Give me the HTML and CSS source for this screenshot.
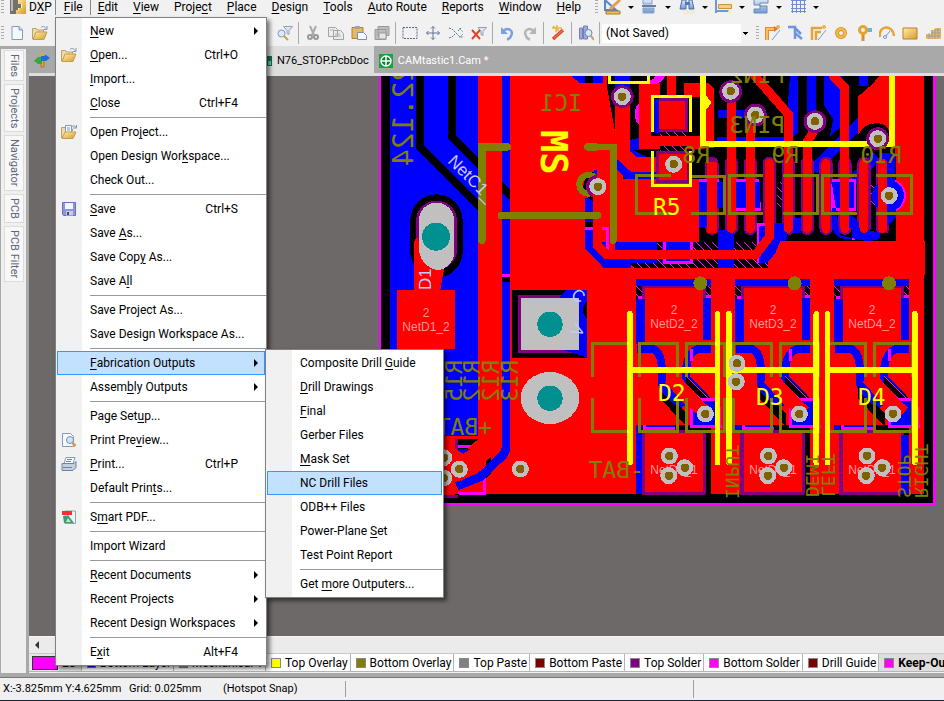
FILE: index.html
```html
<!DOCTYPE html>
<html lang="en">
<head>
<meta charset="utf-8">
<title>N76_STOP.PcbDoc</title>
<link rel="stylesheet" href="styles.css">
</head>
<body>
<svg class="defs" aria-hidden="true">
  <defs>
    <linearGradient id="gold" x1="0" y1="0" x2="1" y2="1"><stop offset="0" stop-color="#fff0a8"/><stop offset="1" stop-color="#d99a28"/></linearGradient>
    <linearGradient id="steel" x1="0" y1="0" x2="0" y2="1"><stop offset="0" stop-color="#dfeafa"/><stop offset="1" stop-color="#6f9ad8"/></linearGradient>
    <pattern id="hatch" width="24" height="24" patternUnits="userSpaceOnUse"><path d="M0 0h24v24H0z"/><path d="M-2-2L26 26" stroke="#f0f" stroke-width="3"/></pattern>
    <symbol id="page" viewBox="0 0 16 16"><path d="M3 1.5h7l3.500 3.500v9.500H3z" fill="#f4f9ff" stroke="#8598b5"/><path d="M10 1.500V5h3.500" fill="#c6d8ee" stroke="#8598b5"/></symbol>
    <symbol id="open" viewBox="0 0 16 16"><path d="M.5 14V3.500h4l1 1.500h6v2" fill="#f1dca6" stroke="#b8a070"/><path d="M1 14.500l3-7.500h11l-3 7.500z" fill="url(#gold)" stroke="#c09a58"/><path d="M9 2.500c2-2 4-1 5 1M15 1v3.500h-3.500" fill="none" stroke="#8096b8"/></symbol>
    <symbol id="openprj" viewBox="0 0 16 16"><path d="M.5 14V3.500h4l1 1.500h6v2" fill="#f1dca6" stroke="#b8a070"/><path d="M4.500 1.500h6V9h-6z" fill="#f8fbff" stroke="#8598b5"/><path d="M6 4h3M6 6h3" stroke="#8598b5"/><path d="M1 14.500l3-6.500h11l-3 6.500z" fill="url(#gold)" stroke="#c09a58"/><path d="M11 2.500c2-1 3-1 4 1M15.500 1v3H12" fill="none" stroke="#8096b8"/></symbol>
    <symbol id="save" viewBox="0 0 16 16"><path d="M1.500 1.500h13v13h-12l-1-1z" fill="#8f94df" stroke="#6a6fb8"/><path d="M4 2h8v6H4z" fill="#f2f5fc"/><path d="M5 10h7v4.500H5z" fill="#c8cde0"/><path d="M6 11h2v3H6z" fill="#444a66"/></symbol>
    <symbol id="preview" viewBox="0 0 16 16"><path d="M1.500 1.500h8l3 3v10h-11z" fill="#f8fbff" stroke="#8598b5"/><circle cx="9" cy="8" r="3.500" fill="#cfe2f6" stroke="#7790b5"/><path d="M11.500 11l3 3" stroke="#d39a4a" stroke-width="2.500"/></symbol>
    <symbol id="print" viewBox="0 0 16 16"><path d="M5 1.500h9l-2 6H3z" fill="#fafcff" stroke="#8898b0"/><path d="M1 7.500h12l2-2v6l-3 3H1z" fill="#c3cee0" stroke="#6f83a3"/><path d="M2 11.500h9M6 3.500h5M5 5.500h5" stroke="#7083a0"/></symbol>
    <symbol id="pdf" viewBox="0 0 16 16"><path d="M4 2h10.500v12.500H4z" fill="#eef4f4" stroke="#91a6aa"/><path d="M1 2h10v4H1z" fill="#e33"/><path d="M2 7h3l2-1 6 8H3z" fill="#3f9c72"/><path d="M7 9l3 4H5z" fill="#bfe6ce"/></symbol>
    <symbol id="filter" viewBox="0 0 16 16"><circle cx="4.500" cy="8.500" r="3.500" fill="#dce9f8" stroke="#8094b5"/><path d="M7 11l4 4" stroke="#d39a4a" stroke-width="2"/><path d="M6.500 1.500h9l-3.500 4v4l-2-1v-3z" fill="#dfe6f1" stroke="#8ea0bc"/></symbol>
    <symbol id="cut" viewBox="0 0 16 16"><path d="M5 1l4 9M11 1L7 10" stroke="#aaa" stroke-width="2"/><circle cx="5" cy="12" r="2" fill="none" stroke="#999" stroke-width="2"/><circle cx="11" cy="12" r="2" fill="none" stroke="#999" stroke-width="2"/></symbol>
    <symbol id="copy" viewBox="0 0 16 16"><path d="M.5 2.500h7l2 2v7h-9zM5.500 5.500h7l3 3v6h-10z" fill="#ececec" stroke="#a3a3a3"/><path d="M7 9h5M7 11h6M2 5h4" stroke="#b0b0b0"/></symbol>
    <symbol id="paste" viewBox="0 0 16 16"><path d="M1 2.500h11v11H1z" fill="#e8b95a" stroke="#ad803a"/><path d="M4 1h5v3H4z" fill="#9aa6b8"/><path d="M6.500 7.500h6l3 3v4h-9z" fill="#f8fbff" stroke="#7890b8"/></symbol>
    <symbol id="pastes" viewBox="0 0 16 16"><path d="M4 1.500h11v9H4zM1 4.500h11v10H1z" fill="#bcbcbc" stroke="#999"/><path d="M5 8h7v6H5z" fill="#e6e6e6" stroke="#999"/></symbol>
    <symbol id="marquee" viewBox="0 0 16 16"><path d="M1 2.500h14v11H1z" fill="none" stroke="#53688f" stroke-dasharray="2 1"/></symbol>
    <symbol id="move" viewBox="0 0 16 16"><path d="M8 1.500v13M1.500 8h13M6 3.500l2-2 2 2M6 12.500l2 2 2-2M3.500 6l-2 2 2 2M12.500 6l2 2-2 2" fill="none" stroke="#617598"/></symbol>
    <symbol id="cross" viewBox="0 0 16 16"><path d="M1 3l3 1 8 8h3M1 13l3-1 3-3M10 6l3-3" fill="none" stroke="#58719c" stroke-dasharray="2 1"/><path d="M11 3l4 4M11 13l4-4" stroke="#8b9"/></symbol>
    <symbol id="clear" viewBox="0 0 16 16"><path d="M7 2.500h8.500l-3.500 4v4l-2-1v-3z" fill="#dfe6f1" stroke="#8ea0bc"/><path d="M1 5l8 9M9 5l-8 9" stroke="#e04326" stroke-width="2"/></symbol>
    <symbol id="undo" viewBox="0 0 16 16"><path d="M4 6c5-4 11-1 8 5-.5 1.500-2 3-4 3.500" fill="none" stroke="#7d9fdf" stroke-width="2.500"/><path d="M2 2v7h7z" fill="#7d9fdf"/></symbol>
    <symbol id="redo" viewBox="0 0 16 16"><path d="M12 6C7 2 1 5 4 11c.5 1.500 2 3 4 3.500" fill="none" stroke="#b5b5b5" stroke-width="2.500"/><path d="M14 2v7H7z" fill="#b5b5b5"/></symbol>
    <symbol id="wand" viewBox="0 0 16 16"><path d="M3 14L13 5" stroke="#d84a28" stroke-width="3.500"/><path d="M4 13L13 5" stroke="#f58a62" stroke-width="1"/><path d="M2 3h10M7 0l-1 7M3 1l6 5" stroke="#e9b23c" stroke-width="1.500"/></symbol>
    <symbol id="browse" viewBox="0 0 16 16"><path d="M1.500 3h3v11h-3zM5.500 1h4v13h-4z" fill="#9daada" stroke="#7480b8"/><circle cx="10.500" cy="8" r="3.500" fill="#dbeafa" stroke="#6f87b4"/><path d="M13 11l3 4" stroke="#d39a4a" stroke-width="2"/></symbol>
    <symbol id="draw" viewBox="0 0 20 16"><path d="M2 1v10h11z" fill="#e7eefb" stroke="#5c83c8" stroke-width="2"/><path d="M7 10L17 1" stroke="#e0a050" stroke-width="3"/><path d="M3 12h14v3H3z" fill="#f0bd55" stroke="#a5782d"/></symbol>
    <symbol id="align" viewBox="0 0 20 16"><path d="M3 0h9v5H3zM3 9h11v5H3z" fill="url(#steel)" stroke="#8b9fc4"/><path d="M2 7h14" stroke="#3d5685" stroke-width="1.500"/></symbol>
    <symbol id="binoc" viewBox="0 0 20 16"><path d="M5 1h4v9H3zM12 1h3l2 9h-5z" fill="url(#steel)" stroke="#4f6fa5"/><path d="M8 3h5v3H8z" fill="#5477b5"/><circle cx="9" cy="13" r="2" fill="none" stroke="#eedb74" stroke-dasharray="1 1"/><circle cx="15" cy="13" r="2" fill="none" stroke="#eedb74" stroke-dasharray="1 1"/></symbol>
    <symbol id="dim" viewBox="0 0 20 16"><path d="M2 0v14M1 12h14" stroke="#6e96da" stroke-width="2"/><path d="M4.500 5.500h13v4h-13z" fill="#f5cf7b" stroke="#c49444"/><circle cx="16" cy="13" r="2" fill="#faf3a3"/></symbol>
    <symbol id="room" viewBox="0 0 20 16"><path d="M3 0h14v4H9v3h7v7H3v-4h6V6H3z" fill="url(#steel)" stroke="#7189b4"/></symbol>
    <symbol id="grid" viewBox="0 0 20 16"><path d="M4.500 0v14M8.500 0v14M12.500 0v14M16.500 0v14M3 1.500h15M3 5.500h15M3 9.500h15M3 12.500h15" stroke="#6c8fd2"/></symbol>
    <symbol id="route" viewBox="0 0 16 16"><path d="M3 15V4h8" fill="none" stroke="#dc8a3b" stroke-width="4"/><path d="M3 15V4h8" fill="none" stroke="#ffbd55" stroke-width="2"/><path d="M8 15l8-10" stroke="#6f9fe5"/><circle cx="14" cy="2" r="2" fill="#f2b046"/><path d="M10 1l4 3-4 3z" fill="#dc713b"/></symbol>
    <symbol id="multi" viewBox="0 0 16 16"><path d="M1 2h7v12M8 3l6 6M8 8l7 6" fill="none" stroke="#7095e0" stroke-width="2.500"/></symbol>
    <symbol id="diff" viewBox="0 0 16 16"><path d="M2 15V3h10M6 15V7h5" fill="none" stroke="#e6a23d" stroke-width="2.500"/><path d="M8 15l8-10" stroke="#6f9fe5"/><circle cx="14" cy="2" r="2" fill="#f2b046"/></symbol>
    <symbol id="pad" viewBox="0 0 16 16"><circle cx="8" cy="8" r="4" fill="none" stroke="#d9912b" stroke-width="4"/><circle cx="8" cy="8" r="4" fill="none" stroke="#f6bf4a" stroke-width="2"/></symbol>
    <symbol id="viaicon" viewBox="0 0 16 16"><path d="M10 5h6" stroke="#6bb6d0" stroke-width="4"/><path d="M7 9v7" stroke="#d98f2e" stroke-width="3"/><circle cx="7" cy="5" r="3.500" fill="none" stroke="#e5a32f" stroke-width="3"/></symbol>
    <symbol id="arc" viewBox="0 0 16 16"><path d="M1 12C-1 0 14-1 15 11" fill="none" stroke="#e6a33b" stroke-width="2.500"/><path d="M7 11l4-5" stroke="#6e96da"/><circle cx="6" cy="12" r="1.500" fill="none" stroke="#6e96da"/></symbol>
    <symbol id="fill" viewBox="0 0 16 16"><path d="M1 3h14v11H1z" fill="url(#gold)" stroke="#bd7f2a"/></symbol>
    <symbol id="poly" viewBox="0 0 16 16"><path d="M1 14V9h5V5h4V3h6v11z" fill="#f4b94c"/><path d="M1 11h15M4 8v6M7 5v9M10 4v10M13 3v11M6 8h10M9 5h7" stroke="#7896d8" stroke-width=".7"/></symbol>
    <symbol id="via" viewBox="-9 -9 18 18"><circle r="8.500" fill="#c0c0c0"/><path d="M-2-4h4l2 2v4L2 4h-4l-2-2v-4z" fill="#806000"/></symbol>
  </defs>
</svg>

<header class="top">
  <div class="menubar">
    <span class="grip"></span>
    <svg class="logo" viewBox="0 0 16 16"><path d="M0 0h8v4h3v5H8v6H0z" fill="#777066"/><path d="M8 0h8v15H6v-4h3V9h3V5H8z" fill="url(#gold)"/><path d="M2 0v12" stroke="#bbb" stroke-width="2"/></svg>
    <nav class="menus" aria-label="Main menu">
      <button class="dxp">D<u>X</u>P</button><button class="opened"><u>F</u>ile</button><button><u>E</u>dit</button><button><u>V</u>iew</button><button>Proje<u>c</u>t</button><button><u>P</u>lace</button><button><u>D</u>esign</button><button><u>T</u>ools</button><button><u>A</u>uto Route</button><button><u>R</u>eports</button><button><u>W</u>indow</button><button><u>H</u>elp</button>
    </nav>
    <div class="utils">
      <span class="grip"></span>
      <button class="drop" aria-label="Utility tools"><svg><use href="#draw"/></svg></button>
      <button class="drop" aria-label="Alignment tools"><svg><use href="#align"/></svg></button>
      <button class="drop" aria-label="Find selections"><svg><use href="#binoc"/></svg></button>
      <button class="drop" aria-label="Dimensions"><svg><use href="#dim"/></svg></button>
      <button class="drop" aria-label="Rooms"><svg><use href="#room"/></svg></button>
      <button class="drop" aria-label="Grids"><svg><use href="#grid"/></svg></button>
    </div>
  </div>
  <div class="toolbar">
    <span class="grip"></span>
    <div class="files"><button class="tool" aria-label="New"><svg><use href="#page"/></svg></button><button class="tool" aria-label="Open"><svg><use href="#open"/></svg></button></div>
    <button class="tool" aria-label="Filter"><svg><use href="#filter"/></svg></button><i class="bar"></i>
    <button class="tool" aria-label="Cut"><svg><use href="#cut"/></svg></button><button class="tool" aria-label="Copy"><svg><use href="#copy"/></svg></button><button class="tool" aria-label="Paste"><svg><use href="#paste"/></svg></button><button class="tool" aria-label="Rubber stamp"><svg><use href="#pastes"/></svg></button><i class="bar"></i>
    <button class="tool" aria-label="Select area"><svg><use href="#marquee"/></svg></button><button class="tool" aria-label="Move"><svg><use href="#move"/></svg></button><button class="tool" aria-label="Deselect"><svg><use href="#cross"/></svg></button><button class="tool" aria-label="Clear filter"><svg><use href="#clear"/></svg></button><i class="bar"></i>
    <button class="tool" aria-label="Undo"><svg><use href="#undo"/></svg></button><button class="tool" aria-label="Redo"><svg><use href="#redo"/></svg></button><i class="bar"></i>
    <button class="tool" aria-label="Cross probe"><svg><use href="#wand"/></svg></button><i class="bar"></i>
    <button class="tool" aria-label="Browse"><svg><use href="#browse"/></svg></button><i class="bar"></i>
    <select class="saved" aria-label="View configuration"><option>(Not Saved)</option></select>
    <span class="grip wiregrip"></span>
    <button class="tool" aria-label="Route"><svg><use href="#route"/></svg></button><button class="tool" aria-label="Multi-route"><svg><use href="#multi"/></svg></button><button class="tool" aria-label="Differential pair"><svg><use href="#diff"/></svg></button><button class="tool" aria-label="Pad"><svg><use href="#pad"/></svg></button><button class="tool" aria-label="Via"><svg><use href="#viaicon"/></svg></button><button class="tool" aria-label="Arc"><svg><use href="#arc"/></svg></button><button class="tool" aria-label="Fill"><svg><use href="#fill"/></svg></button><button class="tool" aria-label="Polygon"><svg><use href="#poly"/></svg></button>
  </div>
</header>

<div class="workspace">
  <aside class="side"><button>Files</button><button>Projects</button><button>Navigator</button><button>PCB</button><button>PCB Filter</button></aside>
  <main class="doc">
    <div class="tabs">
      <svg class="home" viewBox="0 0 16 16"><path d="M7 5h3v10H7z" fill="#e3a62e" stroke="#8a611a" stroke-width=".6"/><path d="M0 9l4-4h4v7H4z" fill="#35a83d"/><path d="M16 6l-4-3H7v6h5z" fill="#1870d8"/><path d="M5 4l3-4 3 4z" fill="#d8b12a"/></svg>
      <button class="tab current"><svg viewBox="0 0 12 12"><path d="M0 1h11v10H0z" fill="#176b50"/><path d="M2 3h4v3H2zM7 6h3v4H7z" fill="#62d6a3"/></svg>N76_STOP.PcbDoc</button>
      <button class="tab"><svg viewBox="0 0 14 14"><path d="M0 0h14v14H0z" fill="#17a33a"/><circle cx="7" cy="7" r="5" fill="#0b7f2a" stroke="#fff" stroke-width="1.500"/><path d="M7 2v10M2 7h10" stroke="#fff" stroke-width="1.500"/></svg>CAMtastic1.Cam *</button>
    </div>
    <div class="canvas">
    <svg class="board" viewBox="29 76 915 560" preserveAspectRatio="xMinYMin slice" role="img" aria-label="PCB layout" shape-rendering="crispEdges">
      <path fill="#f0f" d="M379 70h557v436H379z"/><path d="M381 70h552v433H381z"/>
      <path fill="#f00" d="M510 70h414v424H510zM443 436h70v58h-70z"/>
      <path fill="#00f" d="M390 70h88v366h-88zM502 70h8v380h-8z"/>
      <path d="M420 70v77l66 66M452 70v67l60 60" fill="none" stroke="#000" stroke-width="8"/>
      <path fill="#f00" d="M478 70h24v385h-24z"/>

      <g transform="translate(375 70) scale(.33333)">
        <path fill="#f00" d="M405 18h292v642H418q-13 0-13-15z"/>
        <path fill="#00f" d="M588 18h42v21h-15zM657 18h26v20h-26zM720 310l30 15v-40z"/><path d="M630 18h27v20h-27zM697 60h23v220l30 30v20l-53-60z"/>
        <rect x="106" y="373" width="157" height="250" rx="78"/>
        <path fill="#f00" d="M118 530l10-40 100 60-22 50-10 60H116z"/>
        <rect x="123" y="392" width="123" height="208" rx="61" fill="#800080"/><rect x="132" y="398" width="105" height="202" rx="52" fill="#c0c0c0"/>
        <path fill="#f00" d="M116 660V520q4-18 14-18l2 40q6 44 50 58h25l-12 60z"/>
        <circle cx="183" cy="500" r="42" fill="#009090"/>
        <path fill="#f0f" d="M381 612h24v9h-24z"/><path d="M381 621h24v15h-24z"/>
        <path d="M630 455h75v20h-75z"/><path fill="#f0f" d="M630 471h72v80h-10v-72h-62z"/><path fill="#00f" d="M630 385h75v70h-75zM630 480h62v60h58v53h-65l-55-62z"/>
        <circle cx="672" cy="350" r="47"/><path fill="#00f" d="M656 300h26v30h-26z"/>
        <circle cx="641" cy="343" r="28" fill="none" stroke="#808000" stroke-width="18"/><circle cx="668" cy="350" r="35" fill="#800080"/>
        <path fill="none" stroke="#f00" stroke-width="24" d="M669 350v180l30 24h60"/>
        <g fill="none" stroke="#808000" stroke-width="22" stroke-linecap="round"><path d="M397 231h-76v280M638 231h76v280M379 436h290"/></g>
        <use href="#via" x="641" y="323" width="54" height="54"/>
      </g>

      <g transform="translate(580 70) scale(.33333)">
        <path d="M80 18h868v497H80z"/>
        <path fill="#f00" d="M80 45h-30v470h60l20-190z"/>
        <path fill="#00f" d="M0 18h15v22H0zM40 18h26v22H40zM105 18h45v50h-45zM150 210l40-10v40h-30l80 40v50H140l-35-40v-50zM222 88h30v100h-30zM415 120h110v24H415zM410 200h210v15H410zM630 18h25v170l-20 20h-20zM681 18h27v150h-27zM733 18h52v150l-35 30 10-50-27-40zM838 18h26v30h-26z"/>
        <path fill="none" stroke="#f00" stroke-width="44" d="M127 80v172l35 32h80"/>
        <path fill="#f00" d="M178 40h62v45h-27v150h-35zM178 198h197v38H178zM262 18h26v65h-26zM312 40h75l14 15v180h-40V80h-49zM110 328h247v187H110zM240 85h78v100h-78z"/>
        <path fill="#f0f" d="M165 135q0-30 13-35v65q-13-10-13-30zM190 40q55 10 65-22h-30q0 15-35 15z"/>
        <path fill="#800080" d="M238 85h87v100h-87zM228 243h103v95H228z"/><path fill="#f00" d="M238 94h78v82h-78zM238 252h84v78h-84z"/>
        <path fill="none" stroke="#00f" stroke-width="32" d="M850 150L700 300M940 210L780 370"/>
        <path fill="#f00" d="M932 18h100v577H948V270l-50-80-64 5V80l40-35 25-27z"/>
        <path d="M834 195q20-40 65-35 40 5 49 105v30h-30l-50-65z"/>
        <g fill="url(#hatch)"><path d="M240 185h80v13h-80zM240 228h80v15h-80zM590 335h20v75h-20zM870 335h20v75h-20zM105 515h460v78H160z"/></g>
        <g fill="none" stroke="#800080" stroke-width="40" stroke-linecap="round"><path d="M396 280v195M454 280v195M511 280v195M568 280v195M625 280v195M682 280v195M738 280v195M795 280v195M852 280v195M908 280v195"/></g>
        <path fill="#f0f" d="M358 328h60v7h-60zM468 328h70l5 95h-75zM532 460h30v120h-30zM755 328h72v95h-75zM815 460h10v50h-10z"/>
        <path fill="#00f" d="M358 335h25v135h-25zM412 335h27v80h-27zM415 480h48v115h-48zM468 335h30v80h-30zM525 335h16v80h-16zM585 460h35v50l-60 70h-22V470zM639 445h25v45h-25zM755 335h25v80h-25v60q20 40 60 30V475h-30V335h15v85l60 60 50 10q-10 30-70 20l-60-15zM808 335h14v80h-14zM104 515h128v64H104zM245 515h90v64h-90z"/>
        <circle cx="928" cy="377" r="50" fill="#f0f"/><circle cx="924" cy="377" r="48" fill="#00f"/><path fill="#00f" d="M922 410h26v30l-26 30zM900 250h45v100h-45z"/>
        <path fill="none" stroke="#00f" stroke-width="28" d="M30 480v50l48 50h75"/><path fill="none" stroke="#f0f" stroke-width="9" d="M253 515v62h82v-62M15 475h67v50"/>
        <g fill="none" stroke="#f00" stroke-width="27" stroke-linecap="round">
          <path d="M454 65v410M511 135v340M525 18l100 115v342M705 155q0 30-23 60v260M738 280v195M760 18l35 35v422M852 280v195M908 280v195M568 280v220l-40 53H80l-26-25V350"/></g>
        <path fill="#f00" d="M382 275h29v215h-29zM0 594h1032v36H0zM600 514h435v100H560z"/>
        <path d="M620 490q35 40 60 10 20 20 40-5v18H620zM900 490h48v-18q-20 42-48 42z"/>
        <g fill="none" stroke="#808000" stroke-width="9"><path d="M272 317H170v114h105M333 320h101v111H333M550 317H449v114h101M610 317h103v114H610M830 317H728v114h102M889 317h105v114H889"/></g>
        <g fill="none" stroke="#808000" stroke-width="20" stroke-linecap="round"><path d="M24 231h76v280M0 436h54"/></g>
        <g fill="none" stroke="#ff0"><path stroke-width="17" d="M370 10v212h567V10M370 80l14 18-14 18"/><path stroke-width="9" d="M217 185V79h115v106M217 243v104h115V243M88 10v27h118V10"/></g>
        <g fill="#800080"><circle cx="127" cy="80" r="34"/><circle cx="452" cy="65" r="34"/><circle cx="526" cy="135" r="34"/><circle cx="705" cy="155" r="34"/><circle cx="893" cy="206" r="34"/></g>
        <use href="#via" x="100" y="53" width="54" height="54"/><use href="#via" x="425" y="37" width="54" height="54"/><use href="#via" x="499" y="108" width="54" height="54"/><use href="#via" x="678" y="127" width="54" height="54"/><use href="#via" x="866" y="179" width="54" height="54"/><use href="#via" x="254" y="256" width="54" height="54"/><use href="#via" x="901" y="350" width="54" height="54"/><use href="#via" x="27" y="323" width="54" height="54"/>
      </g>

      <g transform="translate(375 270) scale(.33333)">
        <path fill="#f00" d="M66 60h174v178H66zM200 498h41v180h-41z"/>
        <path d="M412 60h224v204H412zM245 508h70v30h-70zM333 575l15-15v50l-15 15z"/><path fill="#f0f" d="M248 526h50v8h-50zM324 590h9v85h-80l-5-9h76z"/><path fill="#f00" d="M265 640h59v26h-59z"/>
        <path fill="#800080" d="M429 75h183v174H429z"/><path fill="#00f" d="M555 80l20-20h61v202l-70-22z"/><path d="M636 90l-14 30 14 30z"/>
        <path fill="#c0c0c0" d="M438 84h174v156H438z"/><circle cx="525" cy="163" r="38" fill="#009090"/>
        <ellipse cx="525" cy="384" rx="88" ry="78" fill="#c0c0c0"/><circle cx="525" cy="385" r="38" fill="#009090"/>
        <path fill="none" stroke="#00f" stroke-width="26" d="M393 440v90q0 20-18 34l-60 57-70 28"/>
        <path fill="none" stroke="#f00" stroke-width="60" d="M340 430v90l-100 90"/><path fill="#00f" d="M245 538h40l-20 14z"/>
        <path fill="#800080" d="M207 676h41v8h-41zM241 508h8v30h-8z"/><path fill="none" stroke="#808000" stroke-width="9" d="M760 220H653v101M653 384v100h107"/>
        <use href="#via" x="179" y="536" width="54" height="54"/><use href="#via" x="179" y="597" width="54" height="54"/><use href="#via" x="226" y="571" width="54" height="54"/><use href="#via" x="409" y="570" width="54" height="54"/>
      </g>

      <g transform="translate(580 270) scale(.33333)">
        <g id="cellA">
          <path d="M168 48h225v110H168zM186 465h207v207H186z"/><path fill="url(#hatch)" d="M168 48h30v40h-30zM372 48h21v30h-21z"/>
          <path fill="#f0f" d="M174 78h20v8h-20zM378 76h15v8h-15z"/><path fill="#00f" d="M168 27h225v21H168zM168 88h27v135h-27zM369 84h24v120h-24z"/>
          <path fill="#800080" d="M186 48h192v110H186z"/><path fill="#f00" d="M195 54h174v180H195z"/><path fill="#00f" d="M168 88h27v70h-27zM369 84h24v125h-24z"/>
          <path fill="none" stroke="#00f" stroke-width="24" d="M170 238h50q26 10 26 70v35l60 70M393 238h-40q-36 12-36 85l60 60"/>
          <path d="M240 345l80 85v40l-80-85zM318 315l75 70h-45l-30-40z"/><path fill="url(#hatch)" d="M318 315l75 70h-45l-30-40z"/><path fill="#00f" d="M246 345l50 60-14 0-40-40z"/>
          <path fill="none" stroke="#f00" stroke-width="44" d="M270 320l100 108"/>
          <path fill="#f0f" d="M330 384h90l5 90h-95z"/><path fill="#00f" d="M340 394h72v70h-72z"/><path fill="none" stroke="#f00" stroke-width="40" d="M310 368l67 60"/>
          <path fill="#f0f" d="M189 465h96v15h-96zM330 238h8v35h-8z"/><path fill="#00f" d="M198 465h86v7h-86z"/><path fill="#00f" d="M168 465h18v207h-18z"/>
          <path fill="#800080" d="M186 480h192v195H186z"/><path fill="#f00" d="M195 489h174v177H195z"/>
        </g>
        <use href="#cellA" x="297"/><use href="#cellA" x="594"/>
        <path fill="#00f" d="M963 495h24v177h-24z"/><path fill="#f00" d="M465 480h15v192h-15zM762 480h15v192h-15z"/>
        <path d="M0 672h1050v27H0z"/>
        <g fill="none" stroke="#800080" stroke-width="9"><path d="M190 480v190h184M484 480v190h188M782 480v190h180"/></g>
        <path fill="none" stroke="#808000" stroke-width="9" d="M145 220H38v101M38 384v100h107M180 321V220h113v101M180 384v100h113V384M320 321V220h113v101M320 384v100h113V384M462 321V220h113v101M462 384v100h113V384M603 321V220h113v101M603 384v100h113V384M743 321V220h113v101M743 384v100h113V384M884 321V220h113v101M884 384v100h113V384"/>
        <g fill="#808000"><circle cx="361" cy="40" r="21"/><circle cx="644" cy="40" r="21"/><circle cx="927" cy="40" r="21"/></g>
        <g fill="none" stroke="#ff0" stroke-width="17" stroke-linecap="round"><path d="M150 132v446M413 132v446M150 300h263M447 132v446M709 132v446M447 300h262M743 132v446M1005 132v446M743 300h262"/></g>
      </g>

      <g class="nets">
        <text x="426" y="317">2</text><text x="426" y="331">NetD1_2</text>
        <text x="674" y="314">2</text><text x="674" y="328">NetD2_2</text><text x="773" y="314">2</text><text x="773" y="328">NetD3_2</text><text x="872" y="314">2</text><text x="872" y="328">NetD4_2</text>
        <text x="674" y="474">NetD2_1</text><text x="773" y="474">NetD3_1</text><text x="872" y="474">NetD4_1</text>
      </g>
      <g class="trace"><text transform="translate(447 162) rotate(45)">NetC1_</text><text transform="translate(431 290) rotate(-90)">D1</text><text transform="translate(570 297) rotate(35)">C</text><text transform="translate(580 338) rotate(-60)">V</text></g>

      <g transform="translate(580 270) scale(.33333)">
        <use href="#via" x="349" y="405" width="54" height="54"/><use href="#via" x="631" y="405" width="54" height="54"/><use href="#via" x="912" y="405" width="54" height="54"/><use href="#via" x="444" y="253" width="54" height="54"/><use href="#via" x="442" y="308" width="54" height="54"/>
        <g id="trio"><use href="#via" x="241" y="531" width="54" height="54"/><use href="#via" x="287" y="566" width="54" height="54"/><use href="#via" x="239" y="590" width="54" height="54"/></g><use href="#trio" x="297"/><use href="#trio" x="593"/>
      </g>
      <g class="overlay">
        <text transform="matrix(0 1 1 0 413 65)" class="big">22.124</text>
        <text transform="matrix(-1 0 0 1 582 111)">IC1</text>
        <text transform="matrix(-1 0 0 1 785 83)">PIN2</text><text transform="matrix(-1 0 0 1 785 133)">PIN3</text>
        <text transform="matrix(-1 0 0 1 710 163)">R8</text><text transform="matrix(-1 0 0 1 799 163)">R9</text><text transform="matrix(-1 0 0 1 902 163)">R10</text>
        <text transform="matrix(0 1 1 0 462 360)">R15</text><text transform="matrix(0 1 1 0 480 360)">R12</text><text transform="matrix(0 1 1 0 499 360)">R12</text><text transform="matrix(0 1 1 0 518 360)">R13</text>
        <text transform="matrix(-1 0 0 1 492 435)">+BAT</text><text transform="matrix(-1 0 0 1 644 478)">-BAT</text>
        <g class="vert"><text transform="matrix(0 -1 -1 0 726 499)">INPUT</text><text transform="matrix(0 -1 -1 0 806 497)">DEMI</text><text transform="matrix(0 -1 -1 0 822 497)">LEFT</text><text transform="matrix(0 -1 -1 0 898 498)">STOP</text><text transform="matrix(0 -1 -1 0 915 498)">RIGHT</text></g>
      </g>
      <g class="silk"><text transform="translate(541 130) rotate(90)" class="ms">MS</text><text x="653" y="215">R5</text><text x="658" y="401">D2</text><text x="756" y="405">D3</text><text x="858" y="405">D4</text></g>
    </svg>
    </div>
    <div class="scroll"><button aria-label="Scroll left"></button></div>
    <div class="layers">
      <button class="set"><i></i>LS</button>
      <button class="wide"><i class="c-blue"></i>Bottom Layer</button><button class="wide"><i class="c-mech"></i>Mechanical 1</button><button><i class="c-yellow"></i>Top Overlay</button><button><i class="c-olive"></i>Bottom Overlay</button><button><i class="c-grey"></i>Top Paste</button><button><i class="c-maroon"></i>Bottom Paste</button><button><i class="c-purple"></i>Top Solder</button><button><i class="c-magenta"></i>Bottom Solder</button><button><i class="c-maroon"></i>Drill Guide</button><button class="on"><i class="c-magenta"></i>Keep-Out Layer</button>
    </div>
  </main>
</div>
<footer class="status"><span class="pos">X:-3.825mm Y:4.625mm</span><span class="snap">Grid: 0.025mm</span><span class="hotspot">(Hotspot Snap)</span><span class="cell"></span></footer>

<ul class="menu file" role="menu">
  <li><button class="sub"><u>N</u>ew</button></li>
  <li><button><svg><use href="#open"/></svg><u>O</u>pen...<kbd>Ctrl+O</kbd></button></li>
  <li><button><u>I</u>mport...</button></li>
  <li><button><u>C</u>lose<kbd>Ctrl+F4</kbd></button></li>
  <li class="rule"></li>
  <li><button><svg><use href="#openprj"/></svg>Open Pro<u>j</u>ect...</button></li>
  <li><button>Open Design Wor<u>k</u>space...</button></li>
  <li><button>Check Out...</button></li>
  <li class="rule"></li>
  <li><button><svg><use href="#save"/></svg><u>S</u>ave<kbd>Ctrl+S</kbd></button></li>
  <li><button>Save <u>A</u>s...</button></li>
  <li><button>Save Cop<u>y</u> As...</button></li>
  <li><button>Save A<u>l</u>l</button></li>
  <li class="rule"></li>
  <li><button>Save Project As...</button></li>
  <li><button>Save Design Workspace As...</button></li>
  <li class="rule"></li>
  <li><button class="sub hot"><u>F</u>abrication Outputs</button></li>
  <li><button class="sub">Assem<u>b</u>ly Outputs</button></li>
  <li class="rule"></li>
  <li><button>Page Set<u>u</u>p...</button></li>
  <li><button><svg><use href="#preview"/></svg>Print Pre<u>v</u>iew...</button></li>
  <li><button><svg><use href="#print"/></svg><u>P</u>rint...<kbd>Ctrl+P</kbd></button></li>
  <li><button>Default Prin<u>t</u>s...</button></li>
  <li class="rule"></li>
  <li><button><svg><use href="#pdf"/></svg>S<u>m</u>art PDF...</button></li>
  <li class="rule"></li>
  <li><button>Import Wizard</button></li>
  <li class="rule"></li>
  <li><button class="sub"><u>R</u>ecent Documents</button></li>
  <li><button class="sub">Recent Projects</button></li>
  <li><button class="sub">Recent Design Workspaces</button></li>
  <li class="rule"></li>
  <li><button>E<u>x</u>it<kbd>Alt+F4</kbd></button></li>
</ul>
<ul class="menu outputs" role="menu">
  <li><button>Composite Drill <u>G</u>uide</button></li>
  <li><button><u>D</u>rill Drawings</button></li>
  <li><button><u>F</u>inal</button></li>
  <li><button>Gerber Files</button></li>
  <li><button><u>M</u>ask Set</button></li>
  <li><button class="hot">NC Drill Files</button></li>
  <li><button>ODB++ Files</button></li>
  <li><button>Power-Plane <u>S</u>et</button></li>
  <li><button>Test Point Report</button></li>
  <li class="rule"></li>
  <li><button>Get <u>m</u>ore Outputers...</button></li>
</ul>
</body>
</html>
```
FILE: styles.css
```css
* { box-sizing: border-box; }
body {
  margin: 0;
  height: 100vh;
  display: flex;
  flex-direction: column;
  overflow: hidden;
  position: relative;
  background: #a9a9a9;
  font: 12px/16px Roboto, "Open Sans", sans-serif;
  color: #000;
}
button { font: inherit; color: inherit; border: 0; background: none; padding: 0; margin: 0; white-space: nowrap; }
u { text-underline-offset: 2px; }
.defs { position: absolute; width: 0; height: 0; }

.top { background: #f1f1f1; height: 46px; flex: none; overflow: hidden; }
.menubar { display: flex; align-items: center; height: 18px; padding-bottom: 4px; }
.grip { flex: none; width: 3px; height: 15px; background: repeating-linear-gradient(#aaa 0 1px, transparent 1px 3px); }
.logo { flex: none; width: 16px; height: 16px; margin-left: 6px; }
.menubar > .grip { margin-left: 1px; }
.menus { display: flex; margin-left: 3px; }
.menus button { padding: 0 7px 0 8px; }
.menus .dxp { padding: 0 4px 0 0; }
.utils { display: flex; align-items: center; margin-left: 7px; }
.drop { display: flex; align-items: center; width: 37px; height: 16px; }
.utils .grip { margin-right: 5px; }
.drop svg { width: 20px; height: 16px; }
.drop::after, .sub::after { content: ""; border: 3px solid transparent; border-top-color: #000; border-bottom: 0; margin-left: 5px; }
.toolbar { display: flex; align-items: center; height: 26px; padding-left: 1px; margin-top: 2px; }
.files { display: flex; flex: none; width: 269px; padding-left: 1px; }
.tool { flex: none; width: 23px; height: 22px; display: grid; place-items: center; }
.tool svg { width: 16px; height: 16px; }
.bar { flex: none; width: 5px; height: 22px; border-right: 1px solid #aaa; margin-left: -2px; margin-right: 2px; }
.saved { appearance: none; flex: none; width: 149px; height: 19px; border: 0; border-radius: 0; padding: 0 4px; font: inherit; color: #000; background: linear-gradient(#000, #000) 141px 8px / 5px 1px no-repeat, linear-gradient(#000, #000) 142px 9px / 3px 1px no-repeat, linear-gradient(#000, #000) 143px 10px / 1px 1px no-repeat, linear-gradient(90deg, #fff 139px, #f1f1f1 139px); }
.wiregrip { margin: 0 1px 0 5px; }

.workspace { flex: 1; min-height: 0; display: flex; padding-bottom: 4px; }
.side { width: 28px; flex: none; background: #efefef; border: solid #a9a9a9; border-width: 3px 2px 0 1px; padding: 1px 2px 0 3px; display: flex; flex-direction: column; gap: 3px; align-items: flex-start; }
.side button { writing-mode: vertical-rl; width: 20px; padding: 3px 0; border: 1px solid #dcdcdc; background: #f8f8f8; color: #5d6678; text-align: left; font-size: 11px; }
.doc { flex: 1; min-width: 0; display: flex; flex-direction: column; margin-left: 1px; }
.tabs { display: flex; align-items: center; height: 30px; border-bottom: 3px solid #dedede; flex: none; font-size: 11px; }
.home { width: 16px; height: 16px; margin: 0 211px 0 5px; flex: none; }
.tab { display: flex; align-items: center; height: 27px; gap: 5px; padding: 2px 5px 0; color: #fff; }
.tab svg { width: 14px; height: 14px; }
.tab.current { background: #dedede; color: #000; padding-left: 0; gap: 4px; }
.tab.current svg { width: 12px; height: 12px; }
.canvas { flex: 1; min-height: 0; background: #6d6968; overflow: hidden; }
.board { display: block; width: 100%; height: 100%; }
.board text { font-family: "DejaVu Sans Mono", monospace; }
.board .nets text { font: 12px "Liberation Sans", sans-serif; fill: #ff9a9a; text-anchor: middle; }
.board .trace text { font: 17px "Liberation Sans", sans-serif; fill: #c8c8ff; }
.overlay { fill: #808000; font-size: 23px; }
.overlay .big { font-size: 28px; }
.overlay .vert { font-size: 18px; }
.silk { fill: #ff0; font-size: 23px; }
.silk .ms { font-size: 37px; font-weight: bold; }

.scroll { height: 17px; flex: none; background: #ebebeb; border-top: 1px solid #f8f8f8; }
.scroll button { display: block; width: 17px; height: 16px; }
.scroll button::before { content: ""; display: block; margin: 0 0 0 6px; width: 0; border: 4px solid transparent; border-right-color: #333; border-left: 0; }
.layers { display: flex; height: 20px; flex: none; background: #f0f0f0; overflow: hidden; border-top: 1px solid #c8c8c8; }
.layers button { display: flex; align-items: center; gap: 4px; padding: 0 2px 0 5px; height: 18px; flex: none; background: #fff; border: solid #b4b4b4; border-width: 0 1px 1px 0; }
.layers i { width: 10px; height: 10px; border: 1px solid #888; }
.layers .set { width: 53px; background: #e6e6e6; padding: 0 3px; }
.layers .set i { width: 26px; height: 14px; background: #f0f; border-color: #333; }
.layers .wide { width: 92px; }
.layers .on { background: #dedede; font-weight: bold; }
.c-blue { background: #00f; } .c-mech { background: #a0a0a0; } .c-yellow { background: #ff0; } .c-olive { background: #808000; }
.c-grey { background: #808080; } .c-maroon { background: #800000; } .c-purple { background: #800080; } .c-magenta { background: #f0f; }
.status { flex: none; height: 24px; background: #f0f0f0; border-top: 1px solid #777; border-bottom: 1px solid #142234; display: flex; align-items: center; padding-left: 3px; white-space: nowrap; font-size: 11px; }
.pos { width: 126px; }
.snap { width: 94px; }
.hotspot { width: 123px; border-right: 1px solid #a0a0a0; }
.cell { width: 348px; height: 18px; border-right: 1px solid #a0a0a0; }

.menus .opened { background: #f0f0f0; box-shadow: -1px 0 #888, 1px 0 #888; }
.menu { position: absolute; margin: 0; padding: 1px 0; list-style: none; border: 1px solid #808080; background: linear-gradient(90deg, #f1f1f1 26px, #fff 26px); box-shadow: 3px 3px 4px rgba(0, 0, 0, .5); }
.file { left: 55px; top: 17px; width: 212px; }
.outputs { left: 265px; top: 349px; width: 179px; }
.menu button { position: relative; display: flex; align-items: center; width: 100%; height: 24px; padding: 0 28px 0 34px; white-space: pre; text-align: left; }
.menu svg { position: absolute; left: 5px; top: 4px; width: 16px; height: 16px; }
.menu kbd { font: inherit; margin-left: auto; }
.menu .rule { height: 5px; padding: 2px 0; margin-left: 34px; background: #999 content-box; }
.menu .hot { background: #c2e0ff; box-shadow: inset 0 0 0 1px #3399ff; margin: 0 1px; width: calc(100% - 2px); padding-left: 33px; }
.menu .sub { padding-right: 8px; }
.sub::after { border: 4px solid transparent; border-left-color: #000; border-right: 0; margin-left: auto; }
.menu .sub.hot { padding-right: 7px; }
```
